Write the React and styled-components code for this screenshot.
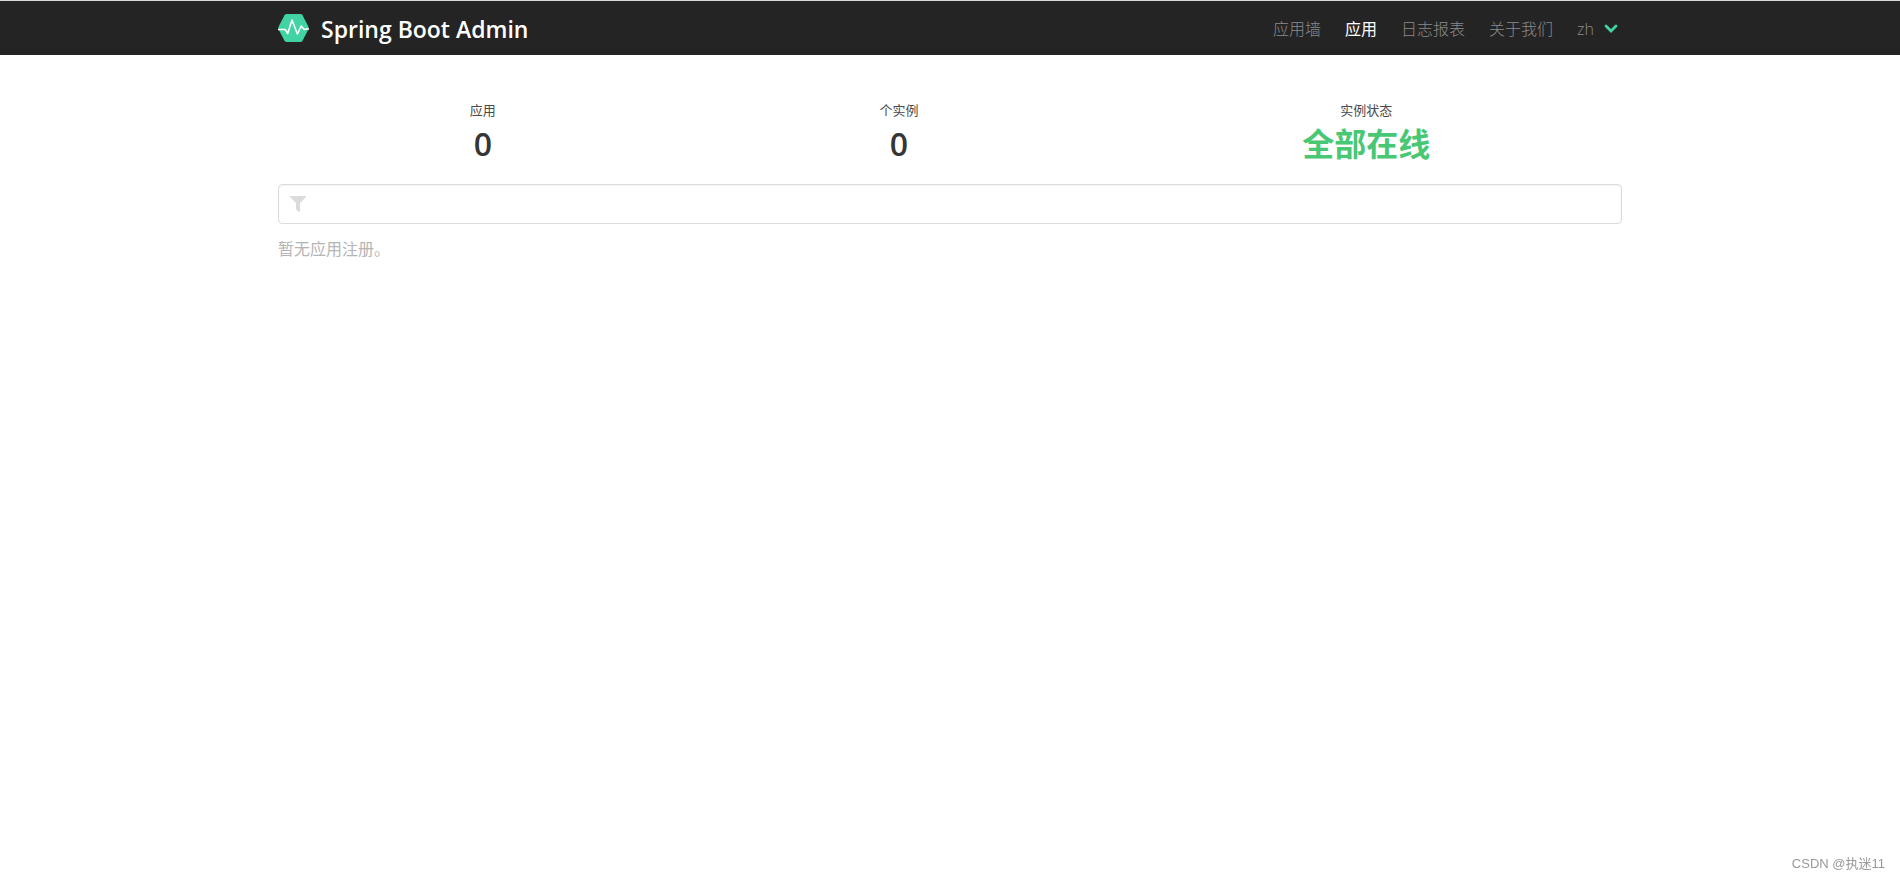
import React from "react";
import styled, { createGlobalStyle } from "styled-components";

const GlobalStyle = createGlobalStyle`
  *, *::before, *::after { box-sizing: border-box; }
  body {
    margin: 0;
    background: #fff;
    color: #4a4a4a;
    font-family: "Open Sans", "Noto Sans CJK SC", sans-serif;
    font-size: 16px;
    line-height: 24px;
  }
  p { margin: 0; }
`;

const Container = styled.div`
  width: 100%;
  max-width: 1344px;
  margin: 0 auto;
`;

const Navbar = styled.header`
  border-top: 1px solid #d5dbd9;
  background: #242424;
`;

const NavbarInner = styled(Container)`
  display: flex;
  align-items: center;
  justify-content: space-between;
  height: 54px;
`;

const Brand = styled.a`
  display: flex;
  align-items: center;
  gap: 12px;
  color: #fff;
  font-size: 23px;
  font-weight: 600;
  line-height: 32px;
  text-decoration: none;
  white-space: nowrap;
`;

const BrandName = styled.span`
  padding-top: 2px;
`;

const Logo = styled.svg`
  width: 31px;
  height: 28px;
`;

const Menu = styled.nav`
  display: flex;
  align-items: center;
  padding-top: 2px;
`;

const MenuLink = styled.a`
  padding: 0 12px;
  color: ${(p) => (p.$active ? "#fff" : "#8a8a8a")};
  font-weight: ${(p) => (p.$active ? 400 : 300)};
  text-decoration: none;
  white-space: nowrap;
`;

const Language = styled.label`
  position: relative;
  display: flex;
  align-items: center;
`;

const LanguageSelect = styled.select`
  appearance: none;
  width: 57px;
  height: 24px;
  padding: 0 0 0 12px;
  border: 0;
  background: transparent;
  color: #8a8a8a;
  font: inherit;
  font-weight: 300;
`;

const Chevron = styled.svg`
  position: absolute;
  right: 4px;
  width: 14px;
  height: 10px;
  pointer-events: none;
`;

const Content = styled(Container)`
  padding: 43px 0 48px;
`;

const Level = styled.section`
  display: flex;
  margin-bottom: 18px;
`;

const LevelItem = styled.div`
  flex: 1 1 auto;
  text-align: center;
`;

const Heading = styled.p`
  font-size: 13px;
  line-height: 24px;
`;

const Figure = styled.p`
  color: ${(p) => (p.$up ? "#48c774" : "#363636")};
  font-size: 32px;
  font-weight: ${(p) => (p.$up ? 700 : 600)};
  line-height: 44px;
`;

const FilterField = styled.label`
  display: flex;
  align-items: center;
  height: 40px;
  margin-bottom: 13px;
  padding: 0 11px;
  gap: 12px;
  border: 1px solid #dbdbdb;
  border-radius: 4px;
  background: #fff;
  box-shadow: inset 0 1px 2px rgba(10, 10, 10, 0.05);
`;

const FilterInput = styled.input`
  flex: 1;
  min-width: 0;
  border: 0;
  outline: 0;
  background: transparent;
  color: #363636;
  font: inherit;
`;

const Empty = styled.p`
  color: #b5b5b5;
`;

const Watermark = styled.div`
  position: fixed;
  right: 15px;
  bottom: 4px;
  color: #999;
  font-family: "Liberation Sans", "Noto Sans CJK SC", sans-serif;
  font-size: 13px;
  line-height: 20px;
`;

const links = [
  { text: "应用墙" },
  { text: "应用", active: true },
  { text: "日志报表" },
  { text: "关于我们" },
];

const stats = [
  { heading: "应用", value: "0" },
  { heading: "个实例", value: "0" },
  { heading: "实例状态", value: "全部在线", up: true },
];

export default function App() {
  return (
    <>
      <GlobalStyle />
      <Navbar>
        <NavbarInner>
          <Brand href="#">
            <Logo viewBox="0 0 32 28" preserveAspectRatio="none" aria-hidden="true">
              <path
                d="M9 0h14q1.500 0 2.300 1.300l6 11.200q.700 1.500 0 3l-6 11.200Q24.500 28 23 28H9q-1.500 0-2.300-1.300l-6-11.200q-.700-1.500 0-3l6-11.200Q7.500 0 9 0z"
                fill="#42d3a5"
              />
              <path
                d="M0 15.500h7.500l2.500 4L14.500 6l5.500 14 4-8 3 3.500 2-.500h3"
                fill="none"
                stroke="#fff"
                strokeWidth="1.600"
                strokeLinejoin="round"
              />
            </Logo>
            <BrandName>Spring Boot Admin</BrandName>
          </Brand>
          <Menu>
            {links.map((l) => (
              <MenuLink key={l.text} href="#" $active={l.active}>
                {l.text}
              </MenuLink>
            ))}
            <Language>
              <LanguageSelect aria-label="语言" defaultValue="zh">
                <option value="zh">zh</option>
              </LanguageSelect>
              <Chevron viewBox="0 0 14 10" aria-hidden="true">
                <path
                  d="M2 2l5 5 5-5"
                  fill="none"
                  stroke="#42d3a5"
                  strokeWidth="2.800"
                  strokeLinecap="round"
                />
              </Chevron>
            </Language>
          </Menu>
        </NavbarInner>
      </Navbar>
      <Content as="main">
        <Level>
          {stats.map((s) => (
            <LevelItem key={s.heading}>
              <Heading>{s.heading}</Heading>
              <Figure $up={s.up}>{s.value}</Figure>
            </LevelItem>
          ))}
        </Level>
        <FilterField>
          <svg width="16" height="16" viewBox="0 0 16 16" aria-hidden="true">
            <path
              d="M.700 0h14.600q1 .300.500 1.200L10 7v8.200q-.300 1-1.200.500L6.300 13.800Q6 13.500 6 13V7L.200 1.200Q-.200.300.700 0z"
              fill="#dbdbdb"
            />
          </svg>
          <FilterInput type="text" aria-label="筛选" />
        </FilterField>
        <Empty>暂无应用注册。</Empty>
      </Content>
      <Watermark>CSDN @执迷11</Watermark>
    </>
  );
}
